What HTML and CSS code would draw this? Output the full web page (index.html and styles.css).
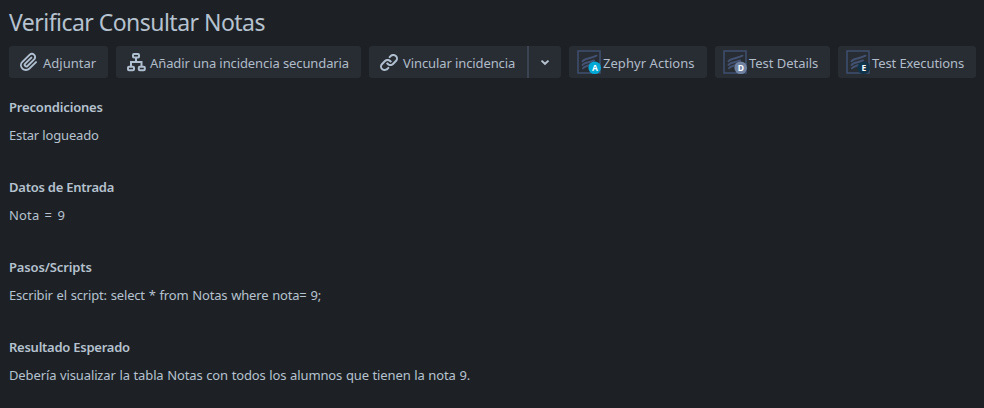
FILE: index.html
```html
<!DOCTYPE html>
<html lang="es">
<head>
<meta charset="utf-8">
<title>Verificar Consultar Notas</title>
<link rel="stylesheet" href="styles.css">
</head>
<body>
<main class="issue">
  <h1 class="title"><span>Verificar Consultar Notas</span></h1>
  <div class="toolbar">
    <button class="btn attach">
      <svg class="icon" viewBox="0 0 24 24"><path d="M11.643 17.965c-1.53 1.495-4.016 1.496-5.542.004a3.773 3.773 0 0 1 .002-5.412l7.147-6.985a2.316 2.316 0 0 1 3.233-.003c.893.873.895 2.282.004 3.153l-6.703 6.55a.653.653 0 0 1-.914-.008.62.62 0 0 1 0-.902l6.229-6.087a.941.941 0 0 0 0-1.353.995.995 0 0 0-1.384 0l-6.23 6.087a2.502 2.502 0 0 0 0 3.607 2.643 2.643 0 0 0 3.683.009l6.703-6.55a4.145 4.145 0 0 0-.003-5.859 4.308 4.308 0 0 0-6.002.003l-7.148 6.985a5.655 5.655 0 0 0-.001 8.118c2.29 2.239 6.015 2.238 8.31-.005l6.686-6.533a.941.941 0 0 0 0-1.353.995.995 0 0 0-1.384 0l-6.686 6.534z"/></svg>
      <span class="label">Adjuntar</span>
    </button>
    <button class="btn child">
      <svg class="icon line" viewBox="0 0 24 24"><rect x="9" y="4" width="6" height="3.400" rx="1"/><rect x="4" y="16.800" width="6" height="3.400" rx="1"/><rect x="14.800" y="16.800" width="6" height="3.400" rx="1"/><path d="M12 7.400V12M7 16.800V12h10.500v4.800"/></svg>
      <span class="label">Añadir una incidencia secundaria</span>
    </button>
    <div class="split">
      <button class="btn link">
        <svg class="icon" viewBox="0 0 24 24"><path d="M12.856 5.457l-.937.92a1.002 1.002 0 0 0 0 1.437 1.047 1.047 0 0 0 1.463 0l.984-.966c.967-.95 2.542-1.135 3.602-.288a2.54 2.54 0 0 1 .203 3.81l-2.903 2.852a2.646 2.646 0 0 1-3.696 0l-1.11-1.09L9 13.57l1.108 1.089c1.822 1.788 4.802 1.788 6.622 0l2.905-2.852a4.558 4.558 0 0 0-.357-6.82c-1.893-1.517-4.695-1.226-6.422.47z"/><path d="M11.144 19.543l.937-.92a1.002 1.002 0 0 0 0-1.437 1.047 1.047 0 0 0-1.462 0l-.985.966c-.967.95-2.542 1.135-3.602.288a2.54 2.54 0 0 1-.203-3.81l2.903-2.852a2.646 2.646 0 0 1 3.696 0l1.11 1.09L15 11.43l-1.108-1.089c-1.822-1.788-4.802-1.788-6.622 0l-2.905 2.852a4.558 4.558 0 0 0 .357 6.82c1.893 1.517 4.695 1.226 6.422-.47z"/></svg>
        <span class="label">Vincular incidencia</span>
      </button>
      <button class="btn more" aria-label="Más">
        <svg class="chevron" viewBox="0 0 10 10"><path d="M2.500 4 5 6.300l2.500-2.300"/></svg>
      </button>
    </div>
    <button class="btn app actions">
      <svg class="app-icon" viewBox="0 0 24 24"><path class="frame" d="M1 1h22v22H1z"/><path class="wing" d="M5.500 11.300C7.500 8 14 8.700 19.500 5.700M5.500 15C7.500 12 12 12.700 17 10.500M6 18.300c1.500-2.300 4-2.200 7-3.300"/><circle class="badge-a" cx="17.700" cy="17.700" r="6.300"/></svg><span class="badge">A</span>
      <span class="label">Zephyr Actions</span>
    </button>
    <button class="btn app details">
      <svg class="app-icon" viewBox="0 0 24 24"><path class="frame" d="M1 1h22v22H1z"/><path class="wing" d="M5.500 11.300C7.500 8 14 8.700 19.500 5.700M5.500 15C7.500 12 12 12.700 17 10.500M6 18.300c1.500-2.300 4-2.200 7-3.300"/><circle class="badge-d" cx="17.700" cy="17.700" r="6.300"/></svg><span class="badge">D</span>
      <span class="label">Test Details</span>
    </button>
    <button class="btn app execs">
      <svg class="app-icon" viewBox="0 0 24 24"><path class="frame" d="M1 1h22v22H1z"/><path class="wing" d="M5.500 11.300C7.500 8 14 8.700 19.500 5.700M5.500 15C7.500 12 12 12.700 17 10.500M6 18.300c1.500-2.300 4-2.200 7-3.300"/><circle class="badge-e" cx="17.700" cy="17.700" r="6.300"/></svg><span class="badge">E</span>
      <span class="label">Test Executions</span>
    </button>
  </div>
  <section class="field"><h2 class="h-pre">Precondiciones</h2><p class="p-pre">Estar logueado</p></section>
  <section class="field"><h2 class="h-data">Datos de Entrada</h2><p class="p-data">Nota = 9</p></section>
  <section class="field"><h2 class="h-steps">Pasos/Scripts</h2><p class="p-steps">Escribir el script: select * from Notas where nota= 9;</p></section>
  <section class="field"><h2 class="h-result">Resultado Esperado</h2><p class="p-result">Debería visualizar la tabla Notas con todos los alumnos que tienen la nota 9.</p></section>
</main>
</body>
</html>
```
FILE: styles.css
```css
* { box-sizing: border-box; }
body {
  margin: 0;
  height: 408px;
  overflow: hidden;
  background: #1d2125;
  color: #b6c2cf;
  font: 13px/20px "Noto Sans", "Open Sans", sans-serif;
}
.issue { padding: 8px 8px 0 9px; }
.title {
  margin: 0 0 10px;
  font-size: 23px;
  line-height: 28px;
  font-weight: 400;
  letter-spacing: -0.530px;
  white-space: nowrap;
}
.toolbar { display: flex; gap: 8px; height: 32px; margin-bottom: 19px; }
.btn {
  position: relative;
  display: flex;
  align-items: center;
  height: 32px;
  margin: 0;
  padding: 0 0 0 8px;
  border: 0;
  border-radius: 3px;
  background: #282d33;
  color: #b0bcc9;
  font: 13px/20px "Noto Sans", "Open Sans", sans-serif;
  white-space: nowrap;
}
.label { padding-top: 2px; }
.attach { width: 99px; }
.child { width: 245px; letter-spacing: -0.100px; }
.split { display: flex; }
.link { width: 158px; border-radius: 3px 0 0 3px; letter-spacing: -0.100px; }
.more { width: 34px; border-left: 2px solid #3b4450; border-radius: 0 3px 3px 0; }
.actions { width: 138px; letter-spacing: 0.050px; }
.details { width: 115px; letter-spacing: -0.040px; }
.execs { width: 138px; letter-spacing: -0.100px; }
.icon { flex: none; width: 24px; height: 24px; margin-right: 2px; fill: #b0bfd0; }
.line { fill: none; stroke: #b0bfd0; stroke-width: 2; }
.chevron { width: 14px; height: 14px; margin-left: 1px; fill: none; stroke: #b6c2cf; stroke-width: 1.400; }
.app-icon { flex: none; width: 24px; height: 24px; margin-right: 2px; }
.frame { fill: none; stroke: #3f4f70; stroke-width: 1.500; }
.wing { fill: none; stroke: #435272; stroke-width: 2; stroke-linecap: round; }
.badge-a { fill: #00a8d6; }
.badge-d { fill: #7183a3; }
.badge-e { fill: #12344b; }
.badge {
  position: absolute;
  left: 19.500px;
  top: 16px;
  width: 13px;
  color: #fff;
  font: 700 8.500px/12px "Open Sans", sans-serif;
  letter-spacing: 0;
  text-align: center;
}
.field { height: 80px; }
.field h2 { margin: 0 0 8px; font-size: 13px; line-height: 20px; font-weight: 600; white-space: nowrap; }
.field p { margin: 0; white-space: nowrap; }
.h-pre { letter-spacing: -0.170px; }
.h-data { letter-spacing: -0.240px; }
.h-steps { letter-spacing: -0.130px; }
.h-result { letter-spacing: -0.250px; }
.p-pre { letter-spacing: -0.150px; }
.p-data { letter-spacing: 0.150px; word-spacing: 1.700px; }
.p-steps { letter-spacing: -0.170px; word-spacing: 0.600px; }
.p-result { letter-spacing: -0.120px; word-spacing: 0.400px; }
```
